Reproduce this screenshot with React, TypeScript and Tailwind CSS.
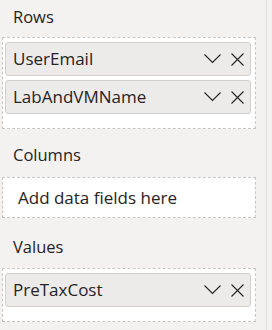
import React from "react";

const font = { fontFamily: '"Open Sans", "Noto Sans", sans-serif' };

function Chevron() {
  return (
    <svg width="18" height="10" viewBox="0 0 18 10" className="shrink-0">
      <polyline points="0.5,0.5 8.5,8.5 16.5,0.5" fill="none" stroke="#252423" strokeWidth="1.1" />
    </svg>
  );
}

function Close() {
  return (
    <svg width="13" height="13" viewBox="0 0 13 13" className="shrink-0">
      <path d="M0.5 0.5 L12.5 12.5 M12.5 0.5 L0.5 12.5" fill="none" stroke="#252423" strokeWidth="1.1" />
    </svg>
  );
}

function Field({ name }: { name: string }) {
  return (
    <div className="w-[246px] h-[34px] flex items-center pl-[7px] pr-[6px] bg-[#edebe9] border border-[#d2d0ce] rounded-[3px]">
      <span className="flex-1 text-[17px] leading-[22px] text-[#252423] truncate">{name}</span>
      <div className="flex items-center gap-[9px]">
        <Chevron />
        <Close />
      </div>
    </div>
  );
}

const wellBox = "ml-[2px] w-[254px] bg-white border border-dashed border-[#c8c6c4]";

export default function App() {
  return (
    <div className="w-[272px] h-[330px] bg-[#f3f2f1] flex" style={font}>
      <div className="w-[267px] h-full border-r border-[#e1dfdd]">
        {/* Rows */}
        <div className="h-[37px] pt-[6px] pl-[13px] text-[16.5px] leading-[22px] text-[#252423]">Rows</div>
        <div className={`${wellBox} h-[92px] pt-[4px] pl-[2px] flex flex-col gap-[4px]`}>
          <Field name="UserEmail" />
          <Field name="LabAndVMName" />
        </div>

        {/* Columns */}
        <div className="h-[48px] pt-[15px] pl-[13px] text-[16.5px] leading-[22px] text-[#252423]">Columns</div>
        <div className={`${wellBox} h-[41px] flex items-center pl-[15px]`}>
          <span className="text-[17px] leading-[22px] text-[#252423]">Add data fields here</span>
        </div>

        {/* Values */}
        <div className="h-[50px] pt-[18px] pl-[13px] text-[16.5px] leading-[22px] text-[#252423]">Values</div>
        <div className={`${wellBox} h-[54px] pt-[4px] pl-[2px]`}>
          <Field name="PreTaxCost" />
        </div>
      </div>
      <div className="flex-1 bg-[#f3f2f1]" />
    </div>
  );
}
